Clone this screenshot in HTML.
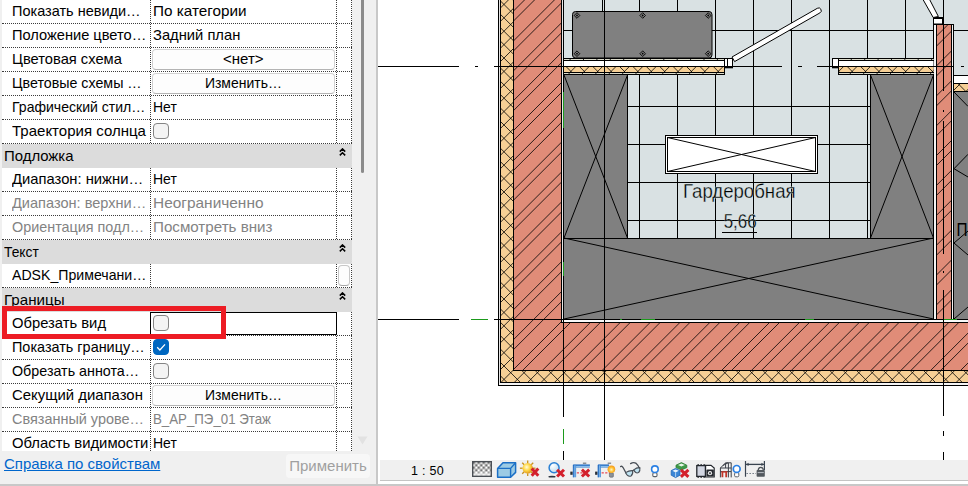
<!DOCTYPE html>
<html lang="ru"><head><meta charset="utf-8"><title>Свойства</title>
<style>
*{box-sizing:border-box;margin:0;padding:0}
html,body{width:968px;height:486px;overflow:hidden;background:#fff}
body{position:relative;font-family:"Liberation Sans","DejaVu Sans",sans-serif;font-size:14.3px;color:#000}
#panel{position:absolute;left:0;top:0;width:376px;height:484px;background:#f0f0f0}
#grid{position:absolute;left:2px;top:0;width:350px;height:451px;background:#fff;overflow:hidden}
.r{position:absolute;left:0;width:350px;height:24px;border-bottom:1px dotted #3c3c3c}
.r .l{position:absolute;left:10px;top:0;height:23px;line-height:22px;white-space:nowrap;transform-origin:0 50%}
.r .v{position:absolute;left:151px;top:0;height:23px;line-height:22px;white-space:nowrap;transform-origin:0 50%}
.r.d{color:#838383}
.h{position:absolute;left:0;width:350px;height:24px;background:#dcdcdc;z-index:3}
.h span{position:absolute;left:1.5px;top:1px;line-height:23px;white-space:nowrap;transform-origin:0 50%}
.vl{position:absolute;top:0;width:0;border-left:1px dotted #3c3c3c}
.cb{position:absolute;left:151px;top:3px;width:16px;height:16px;border:1px solid #858585;border-radius:4px;background:#f4f4f4}
.cb.on{background:#0067c0;border-color:#0067c0}
.cb svg{position:absolute;left:-1px;top:-1px}
.btn{position:absolute;left:150px;top:1px;width:183px;height:21px;border:1px solid #d2d2d2;border-bottom-color:#b4b4b4;border-radius:4px;background:#fdfdfd;text-align:center;line-height:19px}
.btn span{display:inline-block;transform-origin:50% 50%}
.sb{position:absolute;left:336px;top:1px;width:12px;height:21px;border:1px solid #c8c8c8;border-bottom-color:#a8a8a8;border-radius:4px;background:#fdfdfd}
.chev{position:absolute;left:337.3px;top:4.4px;width:7px;height:8px}
#sel{z-index:4;position:absolute;left:150px;top:312px;width:187px;height:23px;border:1px solid #000}
#red{z-index:5;position:absolute;left:2px;top:306px;width:224px;height:33px;border:5px solid #ed1c24}
#thumb{position:absolute;left:361px;top:-4px;width:3px;height:177px;background:#8b8b8b;border-radius:2px}
#link{position:absolute;left:4px;top:455px;line-height:18px;color:#0066cc;text-decoration:underline;white-space:nowrap;transform-origin:0 50%;transform:scaleX(1.048)}
#apply{position:absolute;left:286px;top:454px;width:84px;height:24px;background:#f7f7f7;border-radius:4px;color:#a0a0a0;text-align:center;line-height:23px;font-size:15px}
#split{position:absolute;left:376px;top:0;width:2px;height:486px;background:#c8c8c8}
#bot{position:absolute;left:0;top:484px;width:968px;height:2px;background:#c8c8c8}
#vbar{position:absolute;left:380px;top:460px;width:588px;height:21px;background:#f0f0f0;border-bottom:1px solid #c4c4c4}
#scale{position:absolute;left:411px;top:462px;font-size:12.5px;line-height:18px;white-space:nowrap;letter-spacing:.3px}
#draw{position:absolute;left:378px;top:0}
#icons{position:absolute;left:465px;top:456px}
</style></head><body>
<div id="panel">
<div id="grid">
<div class="r" style="top:0px"><span class="l" style="transform:scaleX(1.0141)">Показать невиди…</span><span class="v" style="transform:scaleX(1.0682)">По категории</span></div>
<div class="r" style="top:24px"><span class="l" style="transform:scaleX(1.0231)">Положение цвето…</span><span class="v" style="transform:scaleX(1.0307)">Задний план</span></div>
<div class="r" style="top:48px"><span class="l" style="transform:scaleX(1.0291)">Цветовая схема</span><div class="btn"><span style="transform:scaleX(1.0511)">&lt;нет&gt;</span></div></div>
<div class="r" style="top:72px"><span class="l" style="transform:scaleX(0.9962)">Цветовые схемы …</span><div class="btn"><span style="transform:scaleX(0.9772)">Изменить…</span></div></div>
<div class="r" style="top:96px"><span class="l" style="transform:scaleX(0.9825)">Графический стил…</span><span class="v" style="transform:scaleX(0.9770)">Нет</span></div>
<div class="r" style="top:120px"><span class="l" style="transform:scaleX(1.0501)">Траектория солнца</span><div class="cb"></div></div>
<div class="h" style="top:144px"><span style="transform:scaleX(1.0429)">Подложка</span><svg class="chev" viewBox="0 0 7 8"><path d="M0.8 3.6 L3.5 0.9 L6.2 3.6 M0.8 7.4 L3.5 4.7 L6.2 7.4" fill="none" stroke="#000" stroke-width="1.5"/></svg></div>
<div class="r" style="top:168px"><span class="l" style="transform:scaleX(1.0333)">Диапазон: нижни…</span><span class="v" style="transform:scaleX(0.9770)">Нет</span></div>
<div class="r d" style="top:192px"><span class="l" style="transform:scaleX(1.0186)">Диапазон: верхни…</span><span class="v" style="transform:scaleX(1.0794)">Неограниченно</span></div>
<div class="r d" style="top:216px"><span class="l" style="transform:scaleX(1.0053)">Ориентация подл…</span><span class="v" style="transform:scaleX(1.0591)">Посмотреть вниз</span></div>
<div class="h" style="top:240px"><span style="transform:scaleX(0.9667)">Текст</span><svg class="chev" viewBox="0 0 7 8"><path d="M0.8 3.6 L3.5 0.9 L6.2 3.6 M0.8 7.4 L3.5 4.7 L6.2 7.4" fill="none" stroke="#000" stroke-width="1.5"/></svg></div>
<div class="r" style="top:264px"><span class="l" style="transform:scaleX(0.9876)">ADSK_Примечани…</span><div class="sb"></div></div>
<div class="h" style="top:288px"><span style="transform:scaleX(1.0597)">Границы</span><svg class="chev" viewBox="0 0 7 8"><path d="M0.8 3.6 L3.5 0.9 L6.2 3.6 M0.8 7.4 L3.5 4.7 L6.2 7.4" fill="none" stroke="#000" stroke-width="1.5"/></svg></div>
<div class="r" style="top:312px"><span class="l" style="transform:scaleX(1.0331)">Обрезать вид</span><div class="cb"></div></div>
<div class="r" style="top:336px"><span class="l" style="transform:scaleX(1.0092)">Показать границу…</span><div class="cb on"><svg viewBox="0 0 16 16" width="16" height="16"><path d="M4.2 8.3 L6.9 11 L12 5.4" fill="none" stroke="#fff" stroke-width="1.3"/></svg></div></div>
<div class="r" style="top:360px"><span class="l" style="transform:scaleX(1.0002)">Обрезать аннота…</span><div class="cb"></div></div>
<div class="r" style="top:384px"><span class="l" style="transform:scaleX(1.0421)">Секущий диапазон</span><div class="btn"><span style="transform:scaleX(0.9772)">Изменить…</span></div></div>
<div class="r d" style="top:408px"><span class="l" style="transform:scaleX(1.0106)">Связанный урове…</span><span class="v" style="transform:scaleX(0.9286)">В_АР_ПЭ_01 Этаж</span></div>
<div class="r" style="top:432px"><span class="l" style="transform:scaleX(1.0369)">Область видимости</span><span class="v" style="transform:scaleX(0.9770)">Нет</span></div>
<div class="vl" style="left:148px;height:451px"></div>
<div class="vl" style="left:334px;height:451px"></div>
<div class="vl" style="left:349px;height:451px"></div>
<div id="selwrap"></div>
</div>
<div id="sel"></div>
<div id="red"></div>
<div id="thumb"></div>
<svg style="position:absolute;left:357px;top:436px" width="11" height="9" viewBox="0 0 11 9"><path d="M0.5 0.5 H10.5 L5.5 8.5 Z" fill="#e2e2e2"/></svg>
<div id="link"><span>Справка по свойствам</span></div>
<div id="apply">Применить</div>
</div>
<div id="split"></div>
<svg id="draw" width="590" height="460" viewBox="378 0 590 460">
<defs>
<clipPath id="cBrick"><path d="M514 0H561V322.5H968V370H514Z M937 24.5H951V319H937Z"/></clipPath>
<clipPath id="cIns"><path d="M501 0H513V370.5H968V382H501Z M564 67H724.5V72H564Z M838.5 67H933.5V72H838.5Z M954 84H968V91H954Z"/></clipPath>
</defs>
<rect x="378" y="0" width="590" height="460" fill="#fff"/>
<rect x="564" y="0" width="370" height="238" fill="#d9e1e3"/>
<rect x="934" y="0" width="34" height="92" fill="#d9e1e3"/>
<path d="M602.5 0V238 M639.5 0V238 M677.5 0V238 M715.5 0V238 M753.5 0V238 M791.5 0V238 M829.5 0V238 M867.5 0V238 M905.5 0V238 M564 30.5H934 M564 106.5H934 M564 144.5H934 M564 182.5H934 M564 220.5H934 M934 30.5H968" stroke="#000" stroke-width="1" fill="none" shape-rendering="crispEdges"/>
<path d="M564 75H627.5V238H870.5V75H934V319.5H564Z" fill="#808080"/>
<rect x="954" y="92" width="14" height="228" fill="#808080"/>
<path d="M564 75L627.5 238M627.5 75L564 238 M870.5 75L933.5 238M933.5 75L870.5 238 M564 238L933.5 319M933.5 238L564 319" stroke="#000" stroke-width="1" fill="none"/>
<path d="M627.5 75V238 M564 238.5H934 M870.5 75V238" stroke="#000" stroke-width="1" fill="none" shape-rendering="crispEdges"/>
<path d="M954 92L968 106.4 M968 154.3L954 168.7L968 177 M968 231L954 243L968 255 M954 319L968 307" stroke="#000" stroke-width="1" fill="none"/>
<path d="M514 0H561.5V322.5H968V370H514Z" fill="#e08c78"/>
<rect x="936.5" y="24.5" width="15" height="295" fill="#e08c78"/>
<g clip-path="url(#cBrick)"><path d="M-502.8 400L-97.8 -5M-492.8 400L-87.8 -5M-472.9 400L-67.9 -5M-462.9 400L-57.9 -5M-443.0 400L-38.0 -5M-433.0 400L-28.0 -5M-413.1 400L-8.1 -5M-403.1 400L1.9 -5M-383.3 400L21.7 -5M-373.3 400L31.7 -5M-353.4 400L51.6 -5M-343.4 400L61.6 -5M-323.5 400L81.5 -5M-313.5 400L91.5 -5M-293.7 400L111.3 -5M-283.7 400L121.3 -5M-263.8 400L141.2 -5M-253.8 400L151.2 -5M-233.9 400L171.1 -5M-223.9 400L181.1 -5M-204.1 400L200.9 -5M-194.1 400L210.9 -5M-174.2 400L230.8 -5M-164.2 400L240.8 -5M-144.3 400L260.7 -5M-134.3 400L270.7 -5M-114.4 400L290.6 -5M-104.4 400L300.6 -5M-84.6 400L320.4 -5M-74.6 400L330.4 -5M-54.7 400L350.3 -5M-44.7 400L360.3 -5M-24.8 400L380.2 -5M-14.8 400L390.2 -5M5.0 400L410.0 -5M15.0 400L420.0 -5M34.9 400L439.9 -5M44.9 400L449.9 -5M64.8 400L469.8 -5M74.8 400L479.8 -5M94.6 400L499.6 -5M104.6 400L509.6 -5M124.5 400L529.5 -5M134.5 400L539.5 -5M154.4 400L559.4 -5M164.4 400L569.4 -5M184.3 400L589.3 -5M194.3 400L599.3 -5M214.1 400L619.1 -5M224.1 400L629.1 -5M244.0 400L649.0 -5M254.0 400L659.0 -5M273.9 400L678.9 -5M283.9 400L688.9 -5M303.7 400L708.7 -5M313.7 400L718.7 -5M333.6 400L738.6 -5M343.6 400L748.6 -5M363.5 400L768.5 -5M373.5 400L778.5 -5M393.4 400L798.4 -5M403.4 400L808.4 -5M423.2 400L828.2 -5M433.2 400L838.2 -5M453.1 400L858.1 -5M463.1 400L868.1 -5M483.0 400L888.0 -5M493.0 400L898.0 -5M512.8 400L917.8 -5M522.8 400L927.8 -5M542.7 400L947.7 -5M552.7 400L957.7 -5M572.6 400L977.6 -5M582.6 400L987.6 -5M602.4 400L1007.4 -5M612.4 400L1017.4 -5M632.3 400L1037.3 -5M642.3 400L1047.3 -5M662.2 400L1067.2 -5M672.2 400L1077.2 -5M692.0 400L1097.0 -5M702.0 400L1107.0 -5M721.9 400L1126.9 -5M731.9 400L1136.9 -5M751.8 400L1156.8 -5M761.8 400L1166.8 -5M781.7 400L1186.7 -5M791.7 400L1196.7 -5M811.5 400L1216.5 -5M821.5 400L1226.5 -5M841.4 400L1246.4 -5M851.4 400L1256.4 -5M871.3 400L1276.3 -5M881.3 400L1286.3 -5M901.1 400L1306.1 -5M911.1 400L1316.1 -5M931.0 400L1336.0 -5M941.0 400L1346.0 -5M960.9 400L1365.9 -5M970.9 400L1375.9 -5" stroke="#000" stroke-width="0.8" fill="none"/></g>
<rect x="501" y="0" width="12.5" height="382" fill="#f6cf95"/>
<rect x="501" y="370.5" width="467" height="11.5" fill="#f6cf95"/>
<path d="M498.5 0V385.5H968 M500.5 0V382.5H968 M513.5 0V370.5H968 M561.5 0V322.5H968 M563.5 0V319.5" stroke="#000" stroke-width="1" fill="none" shape-rendering="crispEdges"/>
<rect x="499" y="0" width="1" height="385" fill="#e4e4e4"/>
<rect x="499" y="383" width="469" height="2" fill="#f4f4f4"/>
<rect x="562" y="0" width="1" height="322" fill="#e8e8e8"/>
<rect x="564" y="320" width="404" height="2" fill="#f8f8f8"/>
<rect x="934" y="24" width="2.5" height="295" fill="#f4f4f4"/>
<rect x="951.5" y="24" width="2" height="295" fill="#f4f4f4"/>
<path d="M933.5 24V319 M936.5 24V319 M951.5 24V319 M953.5 24V319 M933.5 24.5H954" stroke="#000" stroke-width="1" fill="none" shape-rendering="crispEdges"/>
<rect x="933.5" y="17.5" width="9" height="6.5" fill="#fff" stroke="#000" stroke-width="1"/>
<path d="M933.5 18H942.5" stroke="#000" stroke-width="2"/>
<path d="M933.2 17.5L923 -0.5H929.6L938.4 16.5Z" fill="#fff" stroke="#000" stroke-width="1"/>
<rect x="564" y="58" width="160.5" height="17" fill="#fff"/>
<rect x="564" y="59" width="160.5" height="1" fill="#dcdccc"/>
<rect x="564" y="73" width="160.5" height="1" fill="#dcdccc"/>
<rect x="564" y="67" width="160.5" height="5" fill="#f6cf95"/>
<path d="M564 58.5H724.5 M564 60.5H724.5 M564 66.5H724.5 M564 72.5H724.5 M564 74.5H724.5" stroke="#000" stroke-width="1" fill="none" shape-rendering="crispEdges"/>
<path d="M569.6 59.5h1 M568.6 73.5h1 M583.0 59.5h1 M582.0 73.5h1 M596.4 59.5h1 M595.4 73.5h1 M609.8 59.5h1 M608.8 73.5h1 M623.2 59.5h1 M622.2 73.5h1 M636.5 59.5h1 M635.5 73.5h1 M649.9 59.5h1 M648.9 73.5h1 M663.3 59.5h1 M662.3 73.5h1 M676.7 59.5h1 M675.7 73.5h1 M690.1 59.5h1 M689.1 73.5h1 M703.5 59.5h1 M702.5 73.5h1 M716.9 59.5h1 M715.9 73.5h1" stroke="#222" stroke-width="1" fill="none"/>
<rect x="838.5" y="58" width="95.0" height="17" fill="#fff"/>
<rect x="838.5" y="59" width="95.0" height="1" fill="#dcdccc"/>
<rect x="838.5" y="73" width="95.0" height="1" fill="#dcdccc"/>
<rect x="838.5" y="67" width="95.0" height="5" fill="#f6cf95"/>
<path d="M838.5 58.5H933.5 M838.5 60.5H933.5 M838.5 66.5H933.5 M838.5 72.5H933.5 M838.5 74.5H933.5" stroke="#000" stroke-width="1" fill="none" shape-rendering="crispEdges"/>
<path d="M850.8 59.5h1 M849.8 73.5h1 M864.2 59.5h1 M863.2 73.5h1 M877.6 59.5h1 M876.6 73.5h1 M891.0 59.5h1 M890.0 73.5h1 M904.3 59.5h1 M903.3 73.5h1 M917.7 59.5h1 M916.7 73.5h1 M931.1 59.5h1 M930.1 73.5h1" stroke="#222" stroke-width="1" fill="none"/>
<path d="M724.5 58V75 M838.5 58V75" stroke="#000" stroke-width="1" fill="none" shape-rendering="crispEdges"/>
<rect x="954" y="75" width="14" height="8" fill="#fff"/>
<rect x="954" y="84" width="14" height="7" fill="#f6cf95"/>
<path d="M954 75.5H968 M954 83.5H968 M954 91.5H968" stroke="#000" stroke-width="1" fill="none" shape-rendering="crispEdges"/>
<g clip-path="url(#cIns)"><path d="M68.3 400L473.3 -5M81.6 400L486.6 -5M95.0 400L500.0 -5M108.4 400L513.4 -5M121.8 400L526.8 -5M135.2 400L540.2 -5M148.6 400L553.6 -5M162.0 400L567.0 -5M175.4 400L580.4 -5M188.8 400L593.8 -5M202.2 400L607.2 -5M215.5 400L620.5 -5M228.9 400L633.9 -5M242.3 400L647.3 -5M255.7 400L660.7 -5M269.1 400L674.1 -5M282.5 400L687.5 -5M295.9 400L700.9 -5M309.3 400L714.3 -5M322.7 400L727.7 -5M336.1 400L741.1 -5M349.5 400L754.5 -5M362.8 400L767.8 -5M376.2 400L781.2 -5M389.6 400L794.6 -5M403.0 400L808.0 -5M416.4 400L821.4 -5M429.8 400L834.8 -5M443.2 400L848.2 -5M456.6 400L861.6 -5M470.0 400L875.0 -5M483.4 400L888.4 -5M496.7 400L901.7 -5M510.1 400L915.1 -5M523.5 400L928.5 -5M536.9 400L941.9 -5M550.3 400L955.3 -5M563.7 400L968.7 -5M577.1 400L982.1 -5M590.5 400L995.5 -5M603.9 400L1008.9 -5M617.2 400L1022.2 -5M630.6 400L1035.6 -5M644.0 400L1049.0 -5M657.4 400L1062.4 -5M670.8 400L1075.8 -5M684.2 400L1089.2 -5M697.6 400L1102.6 -5M711.0 400L1116.0 -5M724.4 400L1129.4 -5M737.8 400L1142.8 -5M751.2 400L1156.2 -5M764.5 400L1169.5 -5M777.9 400L1182.9 -5M791.3 400L1196.3 -5M804.7 400L1209.7 -5M818.1 400L1223.1 -5M831.5 400L1236.5 -5M844.9 400L1249.9 -5M858.3 400L1263.3 -5M871.7 400L1276.7 -5M885.1 400L1290.1 -5M898.4 400L1303.4 -5M911.8 400L1316.8 -5M925.2 400L1330.2 -5M938.6 400L1343.6 -5M952.0 400L1357.0 -5M66.0 -5L471.0 400M79.4 -5L484.4 400M92.8 -5L497.8 400M106.2 -5L511.2 400M119.6 -5L524.6 400M132.9 -5L538.0 400M146.3 -5L551.3 400M159.7 -5L564.7 400M173.1 -5L578.1 400M186.5 -5L591.5 400M199.9 -5L604.9 400M213.3 -5L618.3 400M226.7 -5L631.7 400M240.1 -5L645.1 400M253.5 -5L658.5 400M266.9 -5L671.9 400M280.2 -5L685.2 400M293.6 -5L698.6 400M307.0 -5L712.0 400M320.4 -5L725.4 400M333.8 -5L738.8 400M347.2 -5L752.2 400M360.6 -5L765.6 400M374.0 -5L779.0 400M387.4 -5L792.4 400M400.8 -5L805.8 400M414.1 -5L819.1 400M427.5 -5L832.5 400M440.9 -5L845.9 400M454.3 -5L859.3 400M467.7 -5L872.7 400M481.1 -5L886.1 400M494.5 -5L899.5 400M507.9 -5L912.9 400M521.3 -5L926.3 400M534.7 -5L939.7 400M548.0 -5L953.0 400M561.4 -5L966.4 400M574.8 -5L979.8 400M588.2 -5L993.2 400M601.6 -5L1006.6 400M615.0 -5L1020.0 400M628.4 -5L1033.4 400M641.8 -5L1046.8 400M655.2 -5L1060.2 400M668.5 -5L1073.5 400M681.9 -5L1086.9 400M695.3 -5L1100.3 400M708.7 -5L1113.7 400M722.1 -5L1127.1 400M735.5 -5L1140.5 400M748.9 -5L1153.9 400M762.3 -5L1167.3 400M775.7 -5L1180.7 400M789.1 -5L1194.1 400M802.5 -5L1207.5 400M815.8 -5L1220.8 400M829.2 -5L1234.2 400M842.6 -5L1247.6 400M856.0 -5L1261.0 400M869.4 -5L1274.4 400M882.8 -5L1287.8 400M896.2 -5L1301.2 400M909.6 -5L1314.6 400M923.0 -5L1328.0 400M936.4 -5L1341.4 400M949.7 -5L1354.7 400M963.1 -5L1368.1 400" stroke="#000" stroke-width="0.8" fill="none"/></g>
<rect x="724.5" y="58.5" width="8" height="8" fill="#fff" stroke="#000" stroke-width="1" shape-rendering="crispEdges"/>
<path d="M727.5 58.5V66" stroke="#000" stroke-width="1" fill="none" shape-rendering="crispEdges"/>
<rect x="724" y="66" width="9" height="2.3" fill="#000"/>
<rect x="832.5" y="58.5" width="6" height="8" fill="#fff" stroke="#000" stroke-width="1" shape-rendering="crispEdges"/>
<rect x="832" y="66" width="7" height="2.3" fill="#000"/>
<path d="M734.6 61.6L819.9 12.9A2.6 2.6 0 0 0 817.3 8.3L732.0 57.0Z" fill="#fff" stroke="#000" stroke-width="1"/>
<rect x="572.5" y="11.5" width="139.5" height="46.5" rx="3" fill="#808080" stroke="#000" stroke-width="1"/>
<path d="M574.2 15.5l2.8 -2.8l2.8 2.8l-2.8 2.8z" fill="none" stroke="#000" stroke-width="0.9"/>
<circle cx="577.0" cy="15.5" r="0.9" fill="#000"/>
<path d="M574.2 53.7l2.8 -2.8l2.8 2.8l-2.8 2.8z" fill="none" stroke="#000" stroke-width="0.9"/>
<circle cx="577.0" cy="53.7" r="0.9" fill="#000"/>
<path d="M639.9 15.5l2.8 -2.8l2.8 2.8l-2.8 2.8z" fill="none" stroke="#000" stroke-width="0.9"/>
<circle cx="642.7" cy="15.5" r="0.9" fill="#000"/>
<path d="M639.9 53.7l2.8 -2.8l2.8 2.8l-2.8 2.8z" fill="none" stroke="#000" stroke-width="0.9"/>
<circle cx="642.7" cy="53.7" r="0.9" fill="#000"/>
<path d="M705.4 15.5l2.8 -2.8l2.8 2.8l-2.8 2.8z" fill="none" stroke="#000" stroke-width="0.9"/>
<circle cx="708.2" cy="15.5" r="0.9" fill="#000"/>
<path d="M705.4 53.7l2.8 -2.8l2.8 2.8l-2.8 2.8z" fill="none" stroke="#000" stroke-width="0.9"/>
<circle cx="708.2" cy="53.7" r="0.9" fill="#000"/>
<rect x="665.5" y="135.5" width="152" height="38" fill="#fff" stroke="#000" stroke-width="1" shape-rendering="crispEdges"/>
<rect x="667.5" y="137.5" width="148" height="34" fill="none" stroke="#000" stroke-width="1" shape-rendering="crispEdges"/>
<path d="M667.5 137.5L815.5 171.5M815.5 137.5L667.5 171.5" stroke="#000" stroke-width="1" fill="none"/>
<text x="739.3" y="198" text-anchor="middle" font-family="'Liberation Sans','DejaVu Sans',sans-serif" font-size="20.5" textLength="112.5" lengthAdjust="spacingAndGlyphs" fill="#000" stroke="#d9e1e3" stroke-width="0.3">Гардеробная</text>
<text x="740.2" y="228" text-anchor="middle" font-family="'Liberation Sans','DejaVu Sans',sans-serif" font-size="21" textLength="33" lengthAdjust="spacingAndGlyphs" fill="#000" stroke="#d9e1e3" stroke-width="0.3">5,66</text>
<path d="M722 232.5H757" stroke="#000" stroke-width="1" fill="none" shape-rendering="crispEdges"/>
<text x="956.5" y="236" font-family="'Liberation Sans','DejaVu Sans',sans-serif" font-size="19" textLength="11" lengthAdjust="spacingAndGlyphs" fill="#000">П</text>
<path d="M378 66.5H459 M475 66.5H478 M494 66.5H782 M798 66.5H802 M817 66.5H954 M961 66.5H964 M378 319.5H459 M494 319.5H968 M563.5 0V416.5 M563.5 451V460 M604.5 0V460 M943.5 0V91 M943.5 110V112 M943.5 121V254 M943.5 271V273 M943.5 290V415.5 M943.5 431V436 M943.5 452V460" stroke="#000" stroke-width="1" fill="none" shape-rendering="crispEdges"/>
<path d="M471 319.5H487.5 M563.5 428.5V444 M563.5 92V128 M563.5 262V276 M640.5 319.5H655 M944 319.5H957 M805 319.5H814 M620 319.5H622" stroke="#1c9a1c" stroke-width="1" fill="none" shape-rendering="crispEdges"/>
</svg>
<div id="vbar"></div>
<div id="scale">1 : 50</div>
<svg id="icons" width="305" height="26" viewBox="465 456 305 26">
<defs>
<radialGradient id="gSun" cx="0.4" cy="0.4" r="0.7"><stop offset="0" stop-color="#fffbe0"/><stop offset="0.45" stop-color="#ffd94a"/><stop offset="1" stop-color="#d98a10"/></radialGradient>
<radialGradient id="gSph" cx="0.35" cy="0.3" r="0.8"><stop offset="0" stop-color="#ffffff"/><stop offset="1" stop-color="#b8d8ee"/></radialGradient>
<radialGradient id="gBulbO" cx="0.5" cy="0.55" r="0.6"><stop offset="0" stop-color="#fff6c0"/><stop offset="0.5" stop-color="#ffc030"/><stop offset="1" stop-color="#f08a10"/></radialGradient>
<linearGradient id="gBar" x1="0" y1="0" x2="0" y2="1"><stop offset="0" stop-color="#1a66c0"/><stop offset="0.6" stop-color="#8cc0ee"/><stop offset="1" stop-color="#2a78cc"/></linearGradient>
<linearGradient id="gBarV" x1="0" y1="0" x2="1" y2="0"><stop offset="0" stop-color="#1a66c0"/><stop offset="0.6" stop-color="#8cc0ee"/><stop offset="1" stop-color="#2a78cc"/></linearGradient>
<linearGradient id="gFade" x1="0" y1="0" x2="0" y2="1"><stop offset="0" stop-color="#fff" stop-opacity="0"/><stop offset="0.6" stop-color="#fff" stop-opacity="0.05"/><stop offset="1" stop-color="#fff" stop-opacity="0.95"/></linearGradient>
<pattern id="chk" x="472.5" y="461.5" width="5" height="5" patternUnits="userSpaceOnUse"><rect width="5" height="5" fill="#fff"/><rect width="2.5" height="2.5" fill="#6e6e6e"/><rect x="2.5" y="2.5" width="2.5" height="2.5" fill="#6e6e6e"/></pattern>
</defs>
<rect x="472.5" y="461.5" width="19" height="15" fill="url(#chk)"/>
<rect x="472.5" y="461.5" width="19" height="15" fill="url(#gFade)"/>
<rect x="472.7" y="461.7" width="18.6" height="14.6" fill="none" stroke="#4a4e54" stroke-width="1.4"/>
<path d="M497.6 468.4L503 462.8H515.6V472.4L510.6 477.2H497.6Z" fill="#9ccbe4" stroke="#1b6fc6" stroke-width="1.5" stroke-linejoin="round"/>
<path d="M497.6 468.4H510.6V477.2 M510.6 468.4L515.6 462.8" fill="none" stroke="#1b6fc6" stroke-width="1.4" stroke-linejoin="round"/>
<g stroke="#c8901c" stroke-width="1.3">
<path d="M532.7 468.2L535.5 468.2"/>
<path d="M531.2 471.7L533.2 473.7"/>
<path d="M527.7 473.2L527.7 476.0"/>
<path d="M524.2 471.7L522.2 473.7"/>
<path d="M522.7 468.2L519.9 468.2"/>
<path d="M524.2 464.7L522.2 462.7"/>
<path d="M527.7 463.2L527.7 460.4"/>
<path d="M531.2 464.7L533.2 462.7"/>
</g>
<circle cx="527.7" cy="468.2" r="5.2" fill="url(#gSun)"/>
<path d="M531.7 468.6L538.3 475.7M538.3 468.6L531.7 475.7" stroke="#d3202c" stroke-width="3.0" fill="none"/>
<ellipse cx="552" cy="476.7" rx="3.6" ry="0.9" fill="#2c3440"/>
<circle cx="554.1" cy="467.7" r="5" fill="url(#gSph)" stroke="#2a80d4" stroke-width="1.5"/>
<path d="M557.1 469.7L564.0 476.5M564.0 469.7L557.1 476.5" stroke="#d3202c" stroke-width="3.0" fill="none"/>
<rect x="570.3" y="471.6" width="2.4" height="3.2" fill="#2b2f36"/>
<rect x="582.9" y="462.5" width="3.4" height="1.5" fill="#8a8f96"/>
<path d="M576.8 472.9H585.3" stroke="#e8202c" stroke-width="1" stroke-dasharray="2.2 1.4"/>
<rect x="573.3" y="464.9" width="16.6" height="2.6" fill="url(#gBar)"/>
<rect x="573.3" y="464.9" width="2.8" height="12.4" fill="url(#gBarV)"/>
<path d="M573.3 477.3V464.9H589.9" fill="none" stroke="#1c68c2" stroke-width="0.8"/>
<path d="M581.9 469.7L589.2 476.5M589.2 469.7L581.9 476.5" stroke="#d3202c" stroke-width="3.0" fill="none"/>
<rect x="595.1" y="471.6" width="2.4" height="3.2" fill="#2b2f36"/>
<rect x="607.7" y="462.5" width="3.4" height="1.5" fill="#8a8f96"/>
<path d="M601.6 472.9H610.1" stroke="#e8202c" stroke-width="1" stroke-dasharray="2.2 1.4"/>
<rect x="598.1" y="464.9" width="11" height="2.6" fill="url(#gBar)"/>
<rect x="598.1" y="464.9" width="2.8" height="12.4" fill="url(#gBarV)"/>
<path d="M598.1 477.3V464.9H609" fill="none" stroke="#1c68c2" stroke-width="0.8"/>
<rect x="609.4" y="472.8" width="4" height="4.4" rx="1" fill="#8c9298" stroke="#5a6068" stroke-width="0.6"/>
<circle cx="611.4" cy="469.3" r="3.8" fill="url(#gBulbO)"/>
<path d="M620.6 466.6Q622 465.5 623.2 467.8L626 473 M630.6 463.6Q633.5 461.6 636.2 463.4Q638.6 465.4 639.6 468.6" fill="none" stroke="#474d55" stroke-width="1.3" stroke-linecap="round"/>
<path d="M625.6 472.6Q629 470.4 632.6 470.6Q633.4 474 631 476Q627.6 477.2 625.6 472.6Z" fill="#bfe3f1" stroke="#474d55" stroke-width="1.1"/>
<path d="M633.8 469.8Q636.6 467.4 639.8 467.6Q640.4 470.6 638.6 472.6Q635.4 474 633.8 469.8Z" fill="#bfe3f1" stroke="#474d55" stroke-width="1.1"/>
<path d="M632.4 470.8L634 470" stroke="#474d55" stroke-width="1.1"/>
<rect x="652.8" y="472.8" width="4.2" height="3.8" rx="1.2" fill="#fff" stroke="#5a6068" stroke-width="1.1"/>
<circle cx="654.9" cy="469.2" r="3.3" fill="#fff" stroke="#2a80e4" stroke-width="1.6"/>
<path d="M676 465.2L681.4 462.6L686.8 465.2V467.6L681.4 470L676 467.6Z" fill="#3f9a48" stroke="#2a7a34" stroke-width="0.8"/>
<path d="M678 465L681.4 466.6L684.8 465L681.4 463.6Z" fill="#e8f6e8"/>
<path d="M671.2 470.6L675.6 468.4L680 470.6V475.2L675.6 477.6L671.2 475.2Z" fill="#3b86d6" stroke="#1e66b8" stroke-width="0.8"/>
<path d="M672.4 470.8L675.6 472.4L678.8 470.8L675.6 469.4Z" fill="#eaf4fc"/>
<path d="M675.6 472.4V477" stroke="#cfe4f6" stroke-width="0.8"/>
<path d="M680.9 469.8L688.4 476.9M688.4 469.8L680.9 476.9" stroke="#d3202c" stroke-width="3.0" fill="none"/>
<rect x="696.8" y="465.6" width="8.6" height="10.8" fill="#d2d6e2" stroke="#22262c" stroke-width="1.3"/>
<path d="M697.4 464.8h1.6M700.4 464.8h1.6M703.4 464.8h1.6M697.4 477.2h1.6M700.4 477.2h1.6M703.4 477.2h1.6" stroke="#22262c" stroke-width="1.2"/>
<path d="M705.6 465.4H711L714.2 468V477H705.6Z" fill="#fff" stroke="#22262c" stroke-width="1.2"/>
<rect x="706.4" y="469.6" width="7.4" height="7" rx="1" fill="#22262c"/>
<circle cx="710" cy="473.2" r="2.1" fill="#fff"/>
<path d="M708.8 473.2H711.2M710 472V474.4" stroke="#22262c" stroke-width="0.9"/>
<path d="M720.4 477.4V468L725.6 462.8H731.2V477.4 M720.4 468H731.2 M725.6 462.8V468 M720.4 471.6H731.2 M728.4 462.8V477.4 M722.8 465.6L728 462.8" fill="none" stroke="#3c4048" stroke-width="1"/>
<path d="M722.4 471.8V477.2M726.2 471.8V477.2" stroke="#c23628" stroke-width="1.8"/>
<path d="M721.4 471.9H727.4" stroke="#c23628" stroke-width="1.4"/>
<rect x="734.6" y="472.6" width="4.2" height="4.2" rx="1.2" fill="#fff" stroke="#5a6068" stroke-width="1"/>
<circle cx="736.7" cy="468.9" r="3.4" fill="#fff" stroke="#2a80e4" stroke-width="1.7"/>
<path d="M745.5 461V476.8 M764.4 461V470" stroke="#3a4450" stroke-width="1.2"/>
<path d="M746 464.4H764" stroke="#3a4450" stroke-width="1.3"/>
<path d="M746 464.4l2.6 -1.6v3.2z M764 464.4l-2.6 -1.6v3.2z" fill="#3a4450"/>
<path d="M746.4 473.5H756" stroke="#7a828c" stroke-width="1" stroke-dasharray="1.6 1.4"/>
<path d="M758.2 470.6Q758.2 467.4 760.8 467.4Q763.4 467.4 763.4 470.6" fill="none" stroke="#4c5258" stroke-width="1.3"/>
<rect x="756.6" y="470" width="8.2" height="6.8" rx="0.8" fill="#52585e"/>
<path d="M757.6 472.6H763.8" stroke="#b9bec4" stroke-width="1"/>
</svg>
<div id="bot"></div>
</body></html>
